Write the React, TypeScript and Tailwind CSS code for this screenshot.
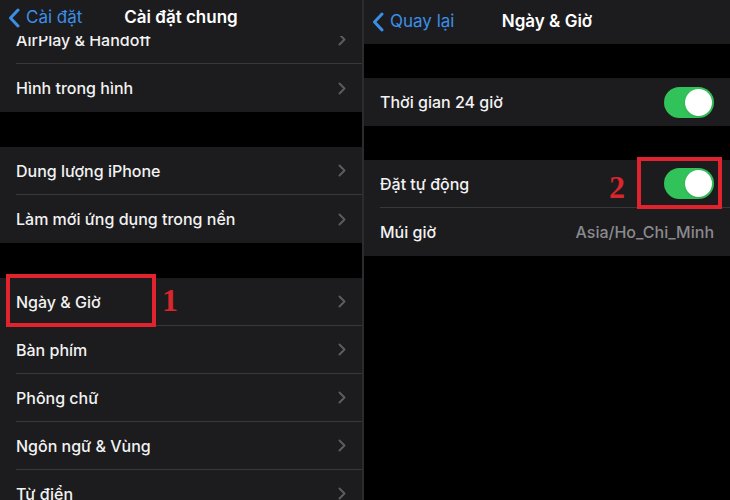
import type { ReactNode } from "react";

const font = { fontFamily: "Inter, 'Noto Sans', sans-serif" };

function Chevron({ color = "#3b8fe8", size = 20 }: { color?: string; size?: number }) {
  return (
    <svg width={size * 0.6} height={size} viewBox="0 0 12 20" fill="none">
      <path d="M10 2L2.5 10L10 18" stroke={color} strokeWidth="3" strokeLinecap="round" strokeLinejoin="round" />
    </svg>
  );
}

function Disclosure() {
  return (
    <svg width="8" height="13" viewBox="0 0 8 13" fill="none">
      <path d="M1.5 1.5L6.5 6.5L1.5 11.5" stroke="#5b5b60" strokeWidth="2" strokeLinecap="round" strokeLinejoin="round" />
    </svg>
  );
}

function Toggle() {
  return (
    <div className="w-[50px] h-[31px] rounded-full bg-[#32c25a] flex items-center justify-end p-[2px]">
      <div className="w-[27px] h-[27px] rounded-full bg-white shadow" />
    </div>
  );
}

function Row({ label, right, divider = true }: { label: string; right: ReactNode; divider?: boolean }) {
  return (
    <div className="h-[48px] bg-[#1c1c1e] pl-4 flex">
      <div className={`flex-1 flex items-center justify-between pr-4 ${divider ? "border-b border-[#38383a]" : ""}`}>
        <span className="text-[16px] font-medium text-[#f2f2f2]">{label}</span>
        {right}
      </div>
    </div>
  );
}

function Header({ back, title, height }: { back: string; title: string; height: string }) {
  return (
    <div className={`${height} bg-[#1c1c1e] grid grid-cols-[1fr_auto_1fr] items-center px-2`}>
      <div className="flex items-center gap-[6px] text-[#3b8fe8] text-[17px]">
        <Chevron />
        <span>{back}</span>
      </div>
      <span className="text-[17px] font-semibold text-white">{title}</span>
      <div />
    </div>
  );
}

export default function App() {
  return (
    <div className="w-[730px] h-[500px] bg-black flex overflow-hidden" style={font}>
      {/* General settings list */}
      <div className="relative w-[362px] shrink-0">
        <Header back="Cài đặt" title="Cài đặt chung" height="h-[36px]" />
        <div className="h-[28px] overflow-hidden">
          <div className="-mt-[20px]">
            <Row label="AirPlay & Handoff" right={<Disclosure />} />
          </div>
        </div>
        <Row label="Hình trong hình" right={<Disclosure />} divider={false} />
        <div className="h-[35px]" />
        <Row label="Dung lượng iPhone" right={<Disclosure />} />
        <Row label="Làm mới ứng dụng trong nền" right={<Disclosure />} divider={false} />
        <div className="h-[35px]" />
        <Row label="Ngày & Giờ" right={<Disclosure />} />
        <Row label="Bàn phím" right={<Disclosure />} />
        <Row label="Phông chữ" right={<Disclosure />} />
        <Row label="Ngôn ngữ & Vùng" right={<Disclosure />} />
        <Row label="Từ điển" right={<Disclosure />} />

        <div className="absolute left-[6px] top-[274px] w-[150px] h-[53px] border-4 border-[#e0232d]" />
        <span
          className="absolute left-[162px] top-[284px] text-[32px] font-bold text-[#d8262c] leading-none"
          style={{ fontFamily: "'Liberation Serif', serif" }}
        >
          1
        </span>
      </div>

      <div className="w-[2px] shrink-0 bg-[#2c2c2e]" />

      {/* Date & time screen */}
      <div className="relative flex-1">
        <Header back="Quay lại" title="Ngày & Giờ" height="h-[44px]" />
        <div className="h-[34px]" />
        <Row label="Thời gian 24 giờ" right={<Toggle />} divider={false} />
        <div className="h-[34px]" />
        <Row label="Đặt tự động" right={<Toggle />} />
        <Row
          label="Múi giờ"
          right={<span className="text-[16px] font-medium text-[#8a8a8e]">Asia/Ho_Chi_Minh</span>}
          divider={false}
        />

        <div className="absolute left-[273px] top-[157px] w-[85px] h-[52px] border-4 border-[#e0232d]" />
        <span
          className="absolute left-[245px] top-[171px] text-[32px] font-bold text-[#d8262c] leading-none"
          style={{ fontFamily: "'Liberation Serif', serif" }}
        >
          2
        </span>
      </div>
    </div>
  );
}
